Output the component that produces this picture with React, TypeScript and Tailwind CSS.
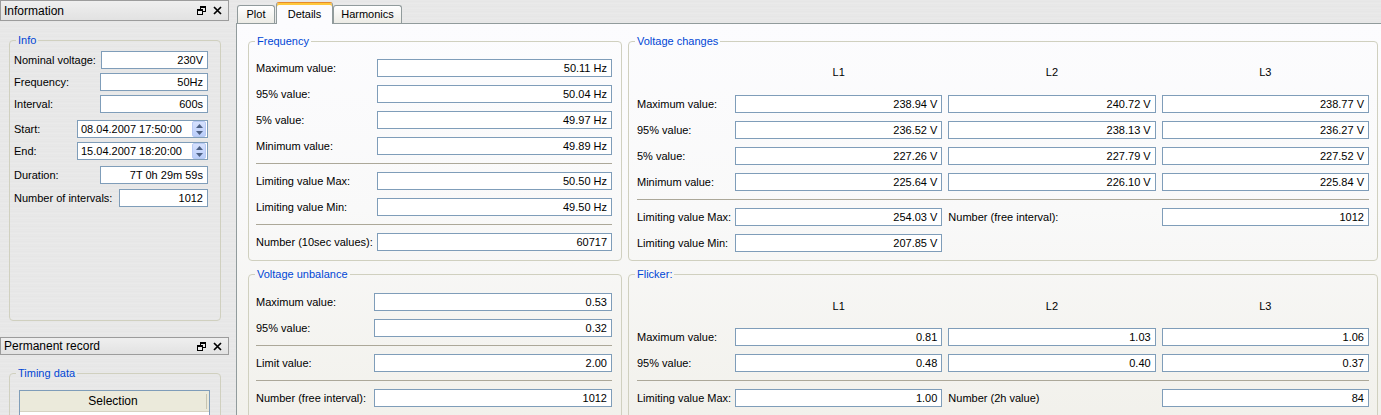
import React from "react";

const brushed =
  "bg-[#e7e7e7] bg-[image:repeating-linear-gradient(180deg,#e9e9e9_0px,#e5e5e5_2px,#ebebeb_3px,#e6e6e6_5px)]";

function Field({ value, className = "" }: { value: string; className?: string }) {
  return (
    <div
      className={`h-[18px] border border-[#7f9db9] bg-white flex items-center justify-end pr-[4px] leading-none ${className}`}
    >
      {value}
    </div>
  );
}

function Group({
  title,
  className = "",
  children,
}: {
  title: string;
  className?: string;
  children: React.ReactNode;
}) {
  return (
    <fieldset className={`border border-[#d0d0bf] rounded-[4px] min-w-0 shrink-0 ${className}`}>
      <legend className="ml-[6px] px-[2px] text-[#0046d5] leading-[14px]">{title}</legend>
      {children}
    </fieldset>
  );
}

function Sep() {
  return <div className="h-px bg-[#aca899]" />;
}

function PanelHeader({ title, h }: { title: string; h: string }) {
  return (
    <div
      className={`${h} w-[229px] shrink-0 border border-[#9c9c9c] bg-[image:linear-gradient(180deg,#efefef,#e2e2e2)] flex items-center justify-between pl-[3px] pr-[6px]`}
    >
      <span className="text-[12px]">{title}</span>
      <div className="flex items-center gap-[7px]">
        {/* restore icon */}
        <svg width="9" height="9" viewBox="0 0 9 9">
          <rect x="3.5" y="0.5" width="5" height="5" fill="none" stroke="#000" />
          <rect x="3" y="0" width="6" height="2" fill="#000" />
          <rect x="0.5" y="3.5" width="5" height="5" fill="#ececec" stroke="#000" />
          <rect x="0" y="3" width="6" height="2" fill="#000" />
        </svg>
        <svg width="9" height="9" viewBox="0 0 9 9">
          <path d="M1 1 L8 8 M8 1 L1 8" stroke="#000" strokeWidth="1.7" />
        </svg>
      </div>
    </div>
  );
}

function Spin() {
  return (
    <div className="w-[14px] h-[16px] rounded-[2px] bg-[image:linear-gradient(180deg,#d6e1fd,#b9cdfa)] border border-[#b7c9f3] flex flex-col items-center justify-center gap-[3px]">
      <svg width="7" height="4" viewBox="0 0 7 4">
        <path d="M0 4 L3.5 0 L7 4 Z" fill="#4d6185" />
      </svg>
      <svg width="7" height="4" viewBox="0 0 7 4">
        <path d="M0 0 L3.5 4 L7 0 Z" fill="#4d6185" />
      </svg>
    </div>
  );
}

function DateField({ value }: { value: string }) {
  return (
    <div className="w-[131px] h-[18px] border border-[#7f9db9] bg-white flex items-center justify-between pl-[3px] pr-[1px]">
      <span>{value}</span>
      <Spin />
    </div>
  );
}

function Row({ label, children, className = "" }: { label: string; children: React.ReactNode; className?: string }) {
  return (
    <div className={`flex items-center justify-between ${className}`}>
      <span>{label}</span>
      {children}
    </div>
  );
}

function Sidebar() {
  return (
    <aside className="w-[230px] shrink-0 flex flex-col">
      <PanelHeader title="Information" h="h-[21px]" />
      <Group title="Info" className="mt-[12px] mx-[9px] h-[288px]">
        <div className="pl-[4px] pr-[12px] pt-[4px] flex flex-col gap-[4px]">
          <Row label="Nominal voltage:">
            <Field value="230V" className="w-[107px]" />
          </Row>
          <Row label="Frequency:">
            <Field value="50Hz" className="w-[108px]" />
          </Row>
          <Row label="Interval:">
            <Field value="600s" className="w-[108px]" />
          </Row>
          <Row label="Start:" className="mt-[3px]">
            <DateField value="08.04.2007 17:50:00" />
          </Row>
          <Row label="End:">
            <DateField value="15.04.2007 18:20:00" />
          </Row>
          <Row label="Duration:" className="mt-[2px]">
            <Field value="7T 0h 29m 59s" className="w-[108px]" />
          </Row>
          <Row label="Number of intervals:" className="mt-[1px]">
            <Field value="1012" className="w-[89px]" />
          </Row>
        </div>
      </Group>
      <div className="mt-[16px] shrink-0">
        <PanelHeader title="Permanent record" h="h-[18px]" />
      </div>
      <Group title="Timing data" className="mt-[11px] mx-[9px] h-[120px]">
        <div className="pl-[9px] pt-[10px]">
          <div className="w-[191px] border border-[#7f9db9] bg-white">
            <div className="h-[21px] bg-[#ebeadb] border-b border-[#d6d2c2] flex items-center">
              <div className="flex-1 text-center text-[12px]">Selection</div>
              <div className="w-px h-[15px] bg-[#c7c5b2] mr-[2px]" />
            </div>
            <div className="h-[20px]" />
          </div>
        </div>
      </Group>
    </aside>
  );
}

function Tab({ label, active = false, className = "" }: { label: string; active?: boolean; className?: string }) {
  if (active) {
    return (
      <div
        className={`h-[22px] -mb-px relative z-10 border border-b-0 border-[#919b9c] border-t-[#e68b2c] rounded-t-[3px] bg-[#fcfcfe] shadow-[inset_0_2px_0_#ffc83c] flex items-center justify-center pt-[1px] ${className}`}
      >
        {label}
      </div>
    );
  }
  return (
    <div
      className={`h-[18px] border border-b-0 border-[#919b9c] rounded-t-[3px] bg-[image:linear-gradient(180deg,#ffffff,#ecebe5)] flex items-center justify-center ${className}`}
    >
      {label}
    </div>
  );
}

function Frequency() {
  const rows: [string, string][] = [
    ["Maximum value:", "50.11 Hz"],
    ["95% value:", "50.04 Hz"],
    ["5% value:", "49.97 Hz"],
    ["Minimum value:", "49.89 Hz"],
  ];
  return (
    <Group title="Frequency" className="h-[227px]">
      <div className="pl-[7px] pr-[9px] pt-[11px] flex flex-col gap-[8px]">
        {rows.map(([l, v]) => (
          <Row key={l} label={l}>
            <Field value={v} className="w-[235px]" />
          </Row>
        ))}
        <Sep />
        <Row label="Limiting value Max:">
          <Field value="50.50 Hz" className="w-[235px]" />
        </Row>
        <Row label="Limiting value Min:">
          <Field value="49.50 Hz" className="w-[235px]" />
        </Row>
        <Sep />
        <Row label="Number (10sec values):">
          <Field value="60717" className="w-[235px]" />
        </Row>
      </div>
    </Group>
  );
}

function Unbalance() {
  return (
    <Group title="Voltage unbalance" className="h-[170px]">
      <div className="pl-[7px] pr-[9px] pt-[12px] flex flex-col gap-[8px]">
        <Row label="Maximum value:">
          <Field value="0.53" className="w-[238px]" />
        </Row>
        <Row label="95% value:">
          <Field value="0.32" className="w-[238px]" />
        </Row>
        <Sep />
        <Row label="Limit value:">
          <Field value="2.00" className="w-[238px]" />
        </Row>
        <Sep />
        <Row label="Number (free interval):">
          <Field value="1012" className="w-[238px]" />
        </Row>
      </div>
    </Group>
  );
}

function PhaseHeader({ className }: { className: string }) {
  return (
    <div className={`grid grid-cols-[92px_1fr_1fr_1fr] gap-x-[6px] h-[14px] items-center ${className}`}>
      <div />
      <div className="text-center">L1</div>
      <div className="text-center">L2</div>
      <div className="text-center">L3</div>
    </div>
  );
}

function PhaseRow({ label, values }: { label: string; values: string[] }) {
  return (
    <div className="grid grid-cols-[92px_1fr_1fr_1fr] gap-x-[6px] items-center">
      <span className="whitespace-nowrap">{label}</span>
      {values.map((v, i) => (
        <Field key={i} value={v} />
      ))}
    </div>
  );
}

function VoltageChanges() {
  return (
    <Group title="Voltage changes" className="h-[227px]">
      <div className="px-[8px] flex flex-col gap-[8px]">
        <PhaseHeader className="mt-[16px] mb-[9px]" />
        <PhaseRow label="Maximum value:" values={["238.94 V", "240.72 V", "238.77 V"]} />
        <PhaseRow label="95% value:" values={["236.52 V", "238.13 V", "236.27 V"]} />
        <PhaseRow label="5% value:" values={["227.26 V", "227.79 V", "227.52 V"]} />
        <PhaseRow label="Minimum value:" values={["225.64 V", "226.10 V", "225.84 V"]} />
        <Sep />
        <div className="grid grid-cols-[92px_1fr_1fr_1fr] gap-x-[6px] items-center">
          <span className="whitespace-nowrap">Limiting value Max:</span>
          <Field value="254.03 V" />
          <span className="whitespace-nowrap">Number (free interval):</span>
          <Field value="1012" />
        </div>
        <div className="grid grid-cols-[92px_1fr_1fr_1fr] gap-x-[6px] items-center">
          <span className="whitespace-nowrap">Limiting value Min:</span>
          <Field value="207.85 V" />
        </div>
      </div>
    </Group>
  );
}

function Flicker() {
  return (
    <Group title="Flicker:" className="h-[170px]">
      <div className="px-[8px] flex flex-col gap-[8px]">
        <PhaseHeader className="mt-[17px] mb-[8px]" />
        <PhaseRow label="Maximum value:" values={["0.81", "1.03", "1.06"]} />
        <PhaseRow label="95% value:" values={["0.48", "0.40", "0.37"]} />
        <Sep />
        <div className="grid grid-cols-[92px_1fr_1fr_1fr] gap-x-[6px] items-center">
          <span className="whitespace-nowrap">Limiting value Max:</span>
          <Field value="1.00" />
          <span className="whitespace-nowrap">Number (2h value)</span>
          <Field value="84" />
        </div>
      </div>
    </Group>
  );
}

export default function App() {
  return (
    <div
      className={`w-[1381px] h-[415px] overflow-hidden flex text-[11px] text-black font-['Liberation_Sans',Arial,sans-serif] ${brushed}`}
    >
      <Sidebar />
      <main className="flex-1 flex flex-col ml-[6px] min-w-0">
        <div className="h-[23px] shrink-0 flex items-end pl-[1px]">
          <Tab label="Plot" className="w-[38px] mr-[1px]" />
          <Tab label="Details" active className="w-[57px]" />
          <Tab label="Harmonics" className="w-[69px]" />
        </div>
        <div className="flex-1 border-t border-l border-[#919b9c] bg-[image:linear-gradient(180deg,#fcfcfe_0%,#f9f9f9_45%,#f1f0ea_100%)] pl-[11px] pt-[10px] flex gap-[6px]">
          <div className="w-[374px] shrink-0 flex flex-col gap-[6px]">
            <Frequency />
            <Unbalance />
          </div>
          <div className="w-[750px] shrink-0 flex flex-col gap-[6px]">
            <VoltageChanges />
            <Flicker />
          </div>
        </div>
      </main>
    </div>
  );
}
